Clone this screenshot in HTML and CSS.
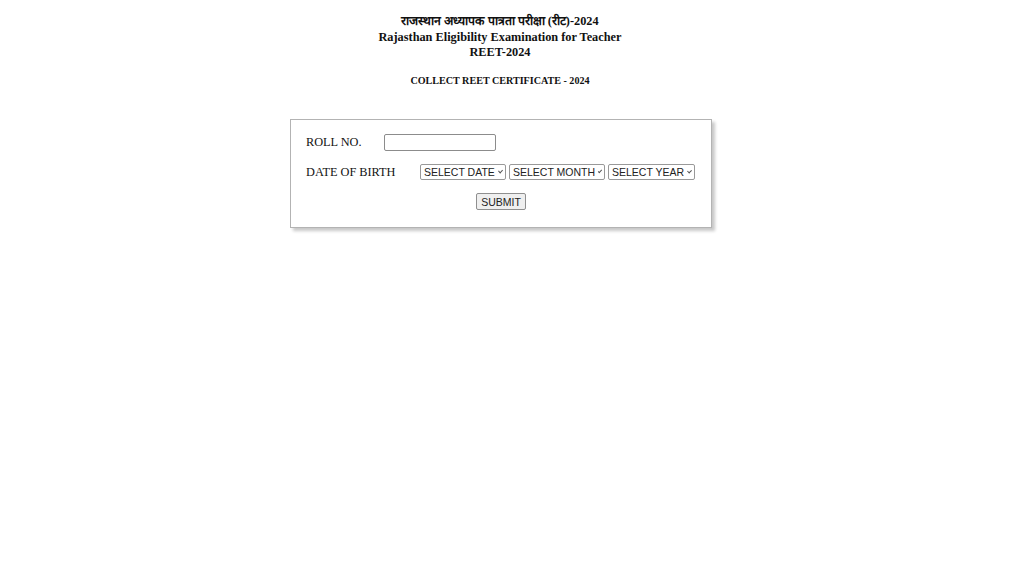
FILE: index.html
```html
<!DOCTYPE html>
<html>
<head>
<meta charset="utf-8">
<link rel="stylesheet" href="styles.css">
</head>
<body>
<div class="page">
  <div class="header">
    <div class="h-line h-hindi">राजस्थान अध्यापक पात्रता परीक्षा (रीट)-2024</div>
    <div class="h-line">Rajasthan Eligibility Examination for Teacher</div>
    <div class="h-line">REET-2024</div>
    <div class="sub">COLLECT REET CERTIFICATE - 2024</div>
  </div>
  <div class="box">
    <div class="row row-roll">
      <span class="label label-roll">ROLL NO.</span>
      <span class="input"></span>
    </div>
    <div class="row row-dob">
      <span class="label label-dob">DATE OF BIRTH</span>
      <span class="sel sel-date">SELECT DATE <span class="chev"></span></span>
      <span class="sel sel-month">SELECT MONTH <span class="chev"></span></span>
      <span class="sel sel-year">SELECT YEAR <span class="chev"></span></span>
    </div>
    <div class="row row-submit">
      <span class="btn">SUBMIT</span>
    </div>
  </div>
</div>
</body>
</html>
```
FILE: styles.css
```css
html, body { margin: 0; padding: 0; background: #fff; }
body {
  font-family: "Liberation Serif", "Times New Roman", serif;
  color: #111;
  width: 1024px;
  height: 576px;
  overflow: hidden;
}
.page { width: 1000px; }
.header {
  text-align: center;
  padding-top: 13px;
}
.h-line {
  font-size: 12.3px;
  font-weight: bold;
  line-height: 15px;
}
.h-hindi { line-height: 17px; }
.sub {
  font-size: 10.1px;
  font-weight: bold;
  margin-top: 14px;
  line-height: 13px;
}
.box {
  margin: 32px 0 0 290px;
  width: 390px;
  padding: 11px 15px 15px 15px;
  border: 1px solid #b3b3b3;
  box-shadow: 3px 3px 3px #c8c8c8;
  height: 81px;
}
.row { display: flex; align-items: center; }
.row > * { flex-shrink: 0; }
.label { font-size: 12.3px; }
.label-roll { width: 78px; }
.label-dob { width: 114px; }
.row-roll { height: 22px; margin-top: 0; }
.input {
  display: block;
  width: 110px;
  height: 15px;
  border: 1px solid #8c8c8c;
  border-radius: 2px;
  background: #fff;
}
.row-dob { margin-top: 11px; height: 16px; }
.sel {
  display: flex;
  align-items: center;
  box-sizing: border-box;
  height: 16px;
  border: 1px solid #999;
  border-radius: 2px;
  font-family: "Liberation Sans", Arial, sans-serif;
  font-size: 10.5px;
  color: #222;
  padding: 0 3px 0 3px;
  margin-right: 3px;
  background: #fff;
  white-space: nowrap;
}
.sel-date { width: 86px; }
.sel-month { width: 96px; }
.sel-year { width: 87px; }
.chev {
  display: inline-block;
  width: 3px;
  height: 3px;
  border-right: 1px solid #555;
  border-bottom: 1px solid #555;
  transform: rotate(45deg);
  margin-left: 4px;
  margin-top: -3px;
}
.row-submit { justify-content: center; margin-top: 13px; }
.btn {
  box-sizing: border-box;
  width: 50px;
  height: 17px;
  border: 1px solid #8f8f8f;
  border-radius: 2px;
  background: #efefef;
  font-family: "Liberation Sans", Arial, sans-serif;
  font-size: 10.5px;
  color: #222;
  display: flex;
  align-items: center;
  justify-content: center;
}
```
